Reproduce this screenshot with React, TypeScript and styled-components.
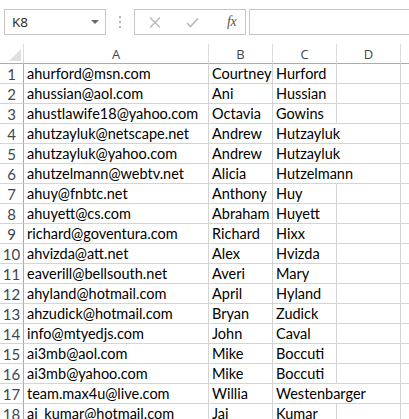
import React from "react";
import styled, { createGlobalStyle } from "styled-components";

const Global = createGlobalStyle`
  html, body { margin: 0; padding: 0; background: #fff; overflow: hidden; }
  body { font-family: Lato, "Noto Sans", sans-serif; }
`;

const Page = styled.div`
  width: 409px;
  height: 419px;
  overflow: hidden;
  background: #fff;
`;

const Toolbar = styled.div`
  display: flex;
  align-items: stretch;
  height: 26px;
  padding: 9px 0 9px 4px;
`;

const NameBox = styled.div`
  box-sizing: border-box;
  width: 102px;
  flex-shrink: 0;
  border: 1px solid #c6c6c6;
  display: flex;
  align-items: center;
  justify-content: space-between;
  padding: 0 6px 0 7px;
  font-family: "Open Sans", sans-serif;
  font-size: 13.5px;
  color: #222;
`;

const Caret = styled.span`
  width: 0;
  height: 0;
  border-left: 4px solid transparent;
  border-right: 4px solid transparent;
  border-top: 4px solid #6a6a6a;
`;

const Dots = styled.div`
  width: 28px;
  flex-shrink: 0;
  display: flex;
  flex-direction: column;
  align-items: center;
  justify-content: center;
  gap: 3px;
  span {
    width: 2px;
    height: 2px;
    background: #b4b4b4;
  }
`;

const FxButtons = styled.div`
  box-sizing: border-box;
  width: 112px;
  flex-shrink: 0;
  border: 1px solid #c6c6c6;
  display: flex;
  align-items: center;
  padding-left: 14px;
`;

const IconSlot = styled.div<{ $w: number }>`
  width: ${(p) => p.$w}px;
  flex-shrink: 0;
  display: flex;
  align-items: center;
`;

const Fx = styled.span`
  font-family: "Liberation Serif", serif;
  font-style: italic;
  font-size: 14px;
  color: #555;
  letter-spacing: -0.5px;
  padding-left: 4px;
`;

const FormulaBar = styled.div`
  flex: 1;
  margin-left: 3px;
  border-top: 1px solid #c6c6c6;
  border-bottom: 1px solid #c6c6c6;
  border-left: 1px solid #c6c6c6;
`;

const Row = styled.div`
  display: grid;
  grid-template-columns: 24px 185px 64px 64px 64px 64px;
  height: 20px;
  box-sizing: border-box;
`;

const HeadCell = styled.div`
  box-sizing: border-box;
  height: 20px;
  border-right: 1px solid #dadada;
  border-bottom: 1px solid #ababab;
  display: flex;
  align-items: center;
  justify-content: center;
  font-family: "Open Sans", sans-serif;
  font-size: 13px;
  color: #444;
`;

const Corner = styled.div`
  box-sizing: border-box;
  height: 20px;
  border-right: 1px solid #dadada;
  border-bottom: 1px solid #ababab;
  position: relative;
`;

const CornerTri = styled.span`
  position: absolute;
  right: 2px;
  bottom: 2px;
  width: 0;
  height: 0;
  border-left: 12px solid transparent;
  border-bottom: 12px solid #dfdfdf;
`;

const RowNum = styled.div`
  box-sizing: border-box;
  height: 20px;
  border-right: 1px solid #ababab;
  border-bottom: 1px solid #d4d4d4;
  text-align: center;
  font-size: 15px;
  line-height: 20px;
  color: #3f4650;
`;

const Cell = styled.div<{ $span?: number }>`
  box-sizing: border-box;
  height: 20px;
  grid-column: span ${(p) => p.$span ?? 1};
  border-right: 1px solid #d4d4d4;
  border-bottom: 1px solid #d4d4d4;
  padding-left: 3px;
  font-size: 14.5px;
  line-height: 20px;
  color: #000;
  white-space: nowrap;
  overflow: hidden;
`;

type R = [string, string, string, boolean?];

const data: R[] = [
  ["ahurford@msn.com", "Courtney", "Hurford"],
  ["ahussian@aol.com", "Ani", "Hussian"],
  ["ahustlawife18@yahoo.com", "Octavia", "Gowins"],
  ["ahutzayluk@netscape.net", "Andrew", "Hutzayluk", true],
  ["ahutzayluk@yahoo.com", "Andrew", "Hutzayluk", true],
  ["ahutzelmann@webtv.net", "Alicia", "Hutzelmann", true],
  ["ahuy@fnbtc.net", "Anthony", "Huy"],
  ["ahuyett@cs.com", "Abraham", "Huyett"],
  ["richard@goventura.com", "Richard", "Hixx"],
  ["ahvizda@att.net", "Alex", "Hvizda"],
  ["eaverill@bellsouth.net", "Averi", "Mary"],
  ["ahyland@hotmail.com", "April", "Hyland"],
  ["ahzudick@hotmail.com", "Bryan", "Zudick"],
  ["info@mtyedjs.com", "John", "Caval"],
  ["ai3mb@aol.com", "Mike", "Boccuti"],
  ["ai3mb@yahoo.com", "Mike", "Boccuti"],
  ["team.max4u@live.com", "Willia", "Westenbarger", true],
  ["ai_kumar@hotmail.com", "Jai", "Kumar"],
];

export default function App() {
  return (
    <Page>
      <Global />
      <Toolbar>
        <NameBox>
          <span>K8</span>
          <Caret />
        </NameBox>
        <Dots>
          <span />
          <span />
          <span />
        </Dots>
        <FxButtons>
          <IconSlot $w={37}>
            <svg width="12" height="11" viewBox="0 0 12 11">
              <path d="M1 0.5 L11 10.5 M11 0.5 L1 10.5" stroke="#b8b8b8" strokeWidth="1.3" fill="none" />
            </svg>
          </IconSlot>
          <IconSlot $w={37}>
            <svg width="13" height="11" viewBox="0 0 13 11">
              <path d="M1 6 L4.5 9.5 L12 1.5" stroke="#b8b8b8" strokeWidth="1.6" fill="none" />
            </svg>
          </IconSlot>
          <IconSlot $w={22}>
            <Fx>fx</Fx>
          </IconSlot>
        </FxButtons>
        <FormulaBar />
      </Toolbar>
      <Row>
        <Corner>
          <CornerTri />
        </Corner>
        <HeadCell>A</HeadCell>
        <HeadCell>B</HeadCell>
        <HeadCell>C</HeadCell>
        <HeadCell>D</HeadCell>
        <HeadCell />
      </Row>
      {data.map(([a, b, c, spill], i) => (
        <Row key={i}>
          <RowNum>{i + 1}</RowNum>
          <Cell>{a}</Cell>
          <Cell>{b}</Cell>
          {spill ? (
            <Cell $span={2}>{c}</Cell>
          ) : (
            <>
              <Cell>{c}</Cell>
              <Cell />
            </>
          )}
          <Cell />
        </Row>
      ))}
    </Page>
  );
}
